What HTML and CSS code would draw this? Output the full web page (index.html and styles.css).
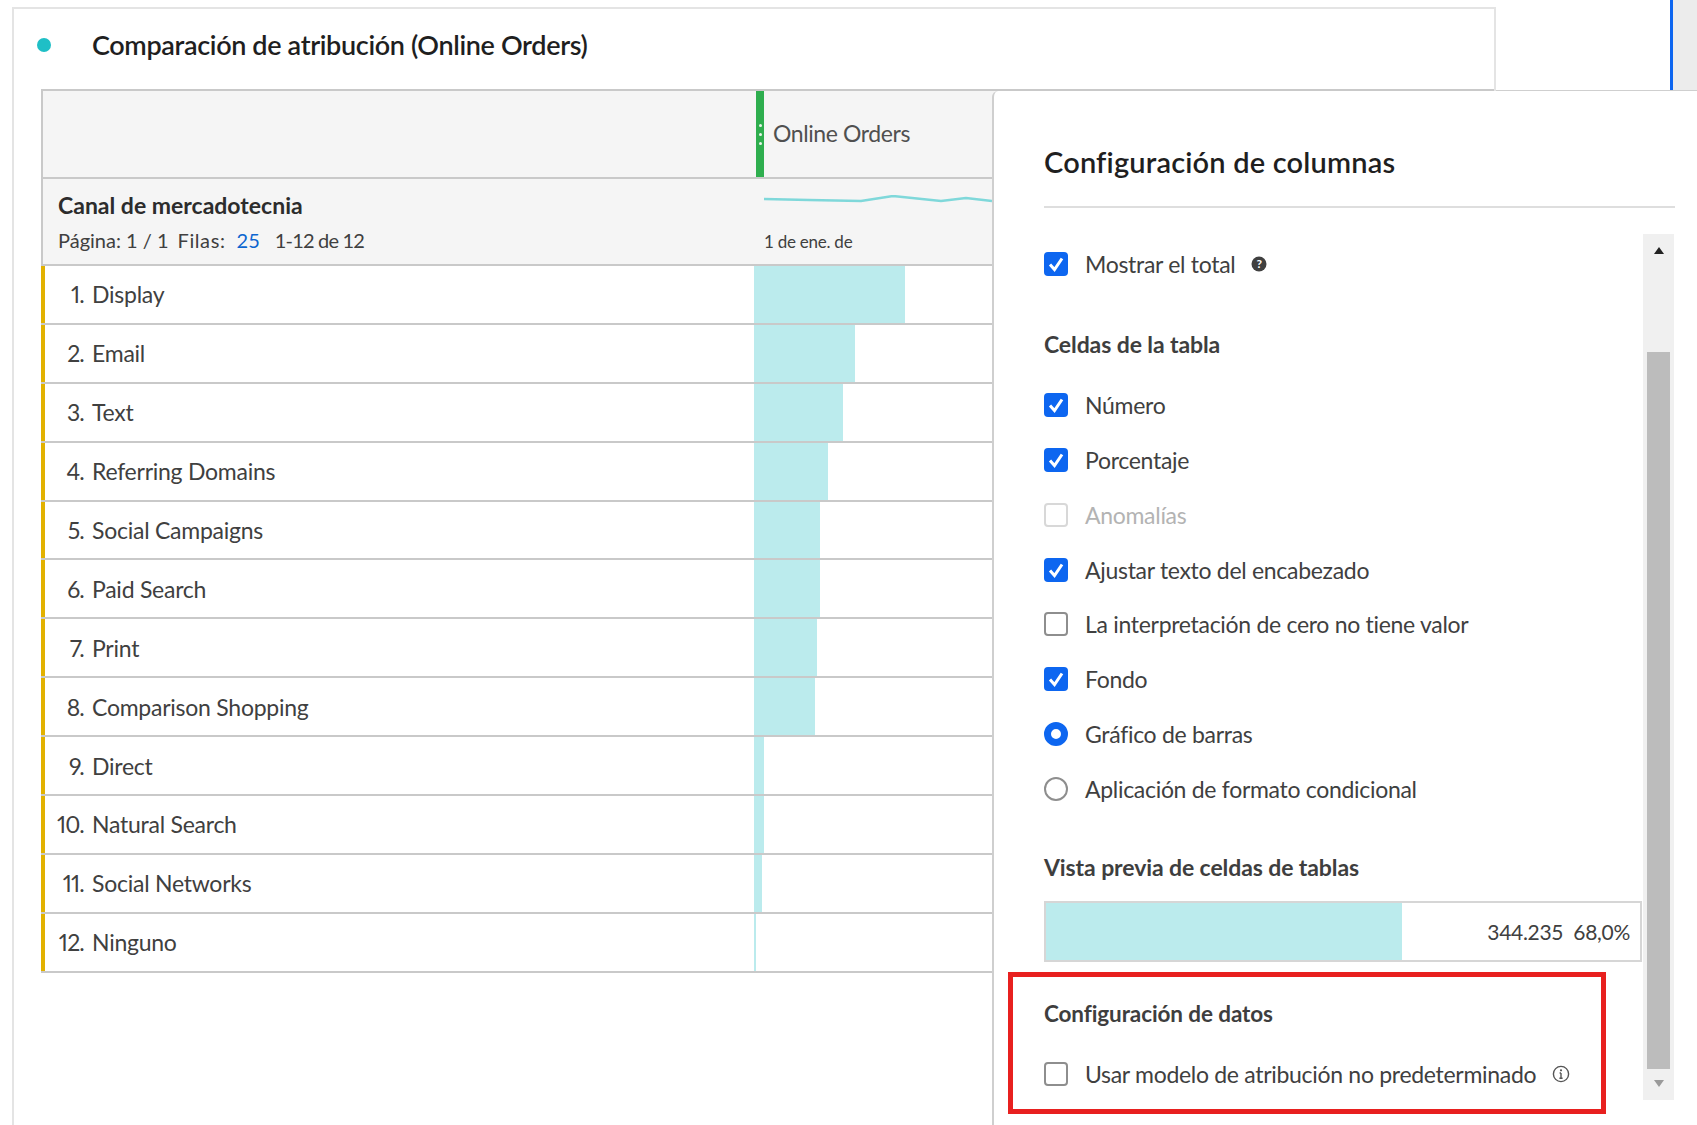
FILE: index.html
```html
<!DOCTYPE html>
<html lang="es">
<head>
    <meta charset="UTF-8">
    <title>Comparación de atribución</title>
    <link rel="stylesheet" href="styles.css">
</head>
<body>
    <div class="page">
        <div class="card">
            <div class="card-title">
                <span class="dot"></span>
                <h1>Comparación de atribución (Online Orders)</h1>
            </div>
            <div class="table">
                <div class="head-row">
                    <div class="head-left"></div>
                    <div class="metric">
                        <span class="grip"><i></i><i></i><i></i></span>
                        <span class="metric-name">Online Orders</span>
                    </div>
                </div>
                <div class="sub-row">
                    <div class="sub-left">
                        <div class="dimension">Canal de mercadotecnia</div>
                        <div class="paging">
                            <span>Página: 1 / 1</span>
                            <span class="rows-label">Filas:</span>
                            <a class="rows-link">25</a>
                            <span class="rows-range">1-12 de 12</span>
                        </div>
                    </div>
                    <div class="sub-right">
                        <svg class="spark" width="228" height="12" viewBox="0 0 228 12"><polyline points="0,4 45,5 97,6 129,1 177,6 202,3 228,6" /></svg>
                        <div class="date">1 de ene. de</div>
                    </div>
                </div>
                <div class="row"><div class="name"><span class="num">1.</span>Display</div><div class="val"><div class="bar" style="width:151px"></div></div></div>
                <div class="row"><div class="name"><span class="num">2.</span>Email</div><div class="val"><div class="bar" style="width:101px"></div></div></div>
                <div class="row"><div class="name"><span class="num">3.</span>Text</div><div class="val"><div class="bar" style="width:89px"></div></div></div>
                <div class="row"><div class="name"><span class="num">4.</span>Referring Domains</div><div class="val"><div class="bar" style="width:74px"></div></div></div>
                <div class="row"><div class="name"><span class="num">5.</span>Social Campaigns</div><div class="val"><div class="bar" style="width:66px"></div></div></div>
                <div class="row"><div class="name"><span class="num">6.</span>Paid Search</div><div class="val"><div class="bar" style="width:66px"></div></div></div>
                <div class="row"><div class="name"><span class="num">7.</span>Print</div><div class="val"><div class="bar" style="width:63px"></div></div></div>
                <div class="row"><div class="name"><span class="num">8.</span>Comparison Shopping</div><div class="val"><div class="bar" style="width:61px"></div></div></div>
                <div class="row"><div class="name"><span class="num">9.</span>Direct</div><div class="val"><div class="bar" style="width:10px"></div></div></div>
                <div class="row"><div class="name"><span class="num">10.</span>Natural Search</div><div class="val"><div class="bar" style="width:10px"></div></div></div>
                <div class="row"><div class="name"><span class="num">11.</span>Social Networks</div><div class="val"><div class="bar" style="width:8px"></div></div></div>
                <div class="row"><div class="name"><span class="num">12.</span>Ninguno</div><div class="val"><div class="bar" style="width:2px"></div></div></div>
            </div>
        </div>
        <div class="side">
            <div class="side-rail"></div>
        </div>
    </div>

    <div class="panel">
        <h2 class="panel-title">Configuración de columnas</h2>
        <div class="panel-body">
            <div class="options">
                <div class="opt first">
                    <span class="check on"><svg viewBox="0 0 24 24"><path d="M6 12.5l4.5 5L18 6.5" /></svg></span>
                    <span>Mostrar el total</span>
                    <svg class="help" viewBox="0 0 16 16"><circle cx="8" cy="8" r="7.5" fill="#404040" /><text x="8" y="12" text-anchor="middle">?</text></svg>
                </div>
                <h3 class="group">Celdas de la tabla</h3>
                <div class="opt">
                    <span class="check on"><svg viewBox="0 0 24 24"><path d="M6 12.5l4.5 5L18 6.5" /></svg></span>
                    <span>Número</span>
                </div>
                <div class="opt">
                    <span class="check on"><svg viewBox="0 0 24 24"><path d="M6 12.5l4.5 5L18 6.5" /></svg></span>
                    <span>Porcentaje</span>
                </div>
                <div class="opt off">
                    <span class="check"></span>
                    <span>Anomalías</span>
                </div>
                <div class="opt">
                    <span class="check on"><svg viewBox="0 0 24 24"><path d="M6 12.5l4.5 5L18 6.5" /></svg></span>
                    <span>Ajustar texto del encabezado</span>
                </div>
                <div class="opt">
                    <span class="check"></span>
                    <span>La interpretación de cero no tiene valor</span>
                </div>
                <div class="opt">
                    <span class="check on"><svg viewBox="0 0 24 24"><path d="M6 12.5l4.5 5L18 6.5" /></svg></span>
                    <span>Fondo</span>
                </div>
                <div class="opt">
                    <span class="radio on"></span>
                    <span>Gráfico de barras</span>
                </div>
                <div class="opt">
                    <span class="radio"></span>
                    <span>Aplicación de formato condicional</span>
                </div>
                <h3 class="group preview-head">Vista previa de celdas de tablas</h3>
                <div class="preview">
                    <div class="preview-bar"></div>
                    <div class="preview-val">344.235 &nbsp;68,0%</div>
                </div>
                <h3 class="group data-head">Configuración de datos</h3>
                <div class="opt">
                    <span class="check"></span>
                    <span>Usar modelo de atribución no predeterminado</span>
                    <svg class="info" viewBox="0 0 18 18"><circle cx="9" cy="9" r="7.6" /><path d="M9 8v5.2M7.4 13.2h3.2M7.6 8h1.4" /><circle class="info-dot" cx="9" cy="5.3" r="1.1" /></svg>
                </div>
            </div>
            <div class="scrollbar">
                <div class="arrow up"></div>
                <div class="thumb"></div>
                <div class="arrow down"></div>
            </div>
        </div>
        <div class="callout"></div>
    </div>
</body>
</html>
```

FILE: styles.css
```css
html, body {
    margin: 0;
    height: 100%;
    background-color: #fff;
    overflow: hidden;
}

body {
    position: relative;
    font-family: "Lato", "Noto Sans", sans-serif;
    color: #404040;
}

.page {
    display: flex;
    align-items: flex-start;
    height: 100%;
}

.card {
    box-sizing: border-box;
    width: 1484px;
    height: 1118px;
    margin: 7px 0 0 12px;
    padding: 0 0 0 27px;
    border: 2px solid #e4e4e4;
    border-bottom: 0;
    flex: none;
}

.card-title {
    display: flex;
    align-items: center;
    height: 80px;
}

.dot {
    width: 14px;
    height: 14px;
    margin-left: -4px;
    margin-top: -8px;
    border-radius: 50%;
    background-color: #1fbfc6;
}

.card-title h1 {
    margin: -10px 0 0 41px;
    font-size: 27px;
    font-weight: 600;
    letter-spacing: -0.35px;
    color: #1f1f1f;
}

.table {
    border-top: 2px solid #c9c9c9;
}

.head-row, .sub-row, .row {
    display: grid;
    grid-template-columns: 713px 1fr;
    box-sizing: border-box;
    border-bottom: 2px solid #c9c9c9;
}

.head-row, .sub-row {
    border-left: 2px solid #c9c9c9;
    grid-template-columns: 711px 1fr;
    background-color: #f5f5f5;
}

.head-row {
    height: 88px;
}

.metric {
    display: flex;
    align-items: center;
    margin-left: 2px;
}

.grip {
    display: flex;
    flex-direction: column;
    align-items: center;
    justify-content: center;
    gap: 6px;
    width: 8px;
    height: 100%;
    background-color: #2eae4e;
}

.grip i {
    width: 3px;
    height: 3px;
    border-radius: 50%;
    background-color: #e8f5ea;
}

.metric-name {
    margin: -2px 0 0 9px;
    font-size: 23px;
    letter-spacing: -0.4px;
    color: #505050;
}

.sub-row {
    height: 87px;
}

.sub-left {
    padding: 10px 0 0 15px;
}

.dimension {
    font-size: 23px;
    font-weight: 700;
    line-height: 32px;
    color: #2c2c2c;
}

.paging {
    display: flex;
    margin-top: 4px;
    font-size: 20px;
    line-height: 30px;
}

.rows-label {
    margin-left: 9px;
    letter-spacing: 0.6px;
}

.rows-link {
    margin-left: 11px;
    color: #0d66d0;
}

.rows-range {
    margin-left: 15px;
    letter-spacing: -0.8px;
}

.sub-right {
    margin-left: 10px;
    padding-top: 16px;
}

.spark {
    display: block;
}

.spark polyline {
    fill: none;
    stroke: #7fd8da;
    stroke-width: 2.5;
}

.date {
    margin-top: 23px;
    font-size: 17px;
    letter-spacing: -0.25px;
    line-height: 24px;
}

.row {
    height: 58.9px;
}

.name {
    display: flex;
    align-items: center;
    border-left: 4px solid #e2b100;
    font-size: 23px;
    letter-spacing: -0.25px;
}

.num {
    width: 39px;
    margin-right: 8px;
    text-align: right;
    font-feature-settings: "pnum";
    letter-spacing: -0.8px;
}

.bar {
    height: 100%;
    background-color: #bbebed;
}

.side {
    display: flex;
    justify-content: flex-end;
    flex: 1;
    box-sizing: border-box;
    height: 92px;
    border-bottom: 2px solid #cfcfcf;
}

.side-rail {
    box-sizing: border-box;
    width: 27px;
    height: 100%;
    border-left: 3px solid #0d66f0;
    background-color: #ececec;
}

.panel {
    position: absolute;
    top: 91px;
    left: 992px;
    right: 0;
    bottom: 0;
    box-sizing: border-box;
    padding-left: 50px;
    border-left: 2px solid #cfcfcf;
    border-top-left-radius: 6px;
    background-color: #fff;
}

.panel-title {
    box-sizing: border-box;
    width: 631px;
    height: 117px;
    margin: 0;
    padding-top: 49px;
    border-bottom: 2px solid #dedede;
    font-size: 29px;
    font-weight: 600;
    line-height: 44px;
    letter-spacing: 0.18px;
    color: #1f1f1f;
}

.panel-body {
    display: flex;
    width: 631px;
    margin-top: 26px;
}

.options {
    width: 599px;
    padding-top: 3px;
    font-size: 23px;
    letter-spacing: -0.3px;
}

.opt {
    display: flex;
    align-items: center;
    height: 54.8px;
}

.opt.off {
    color: #b3b3b3;
}

.check {
    display: block;
    box-sizing: border-box;
    width: 24px;
    height: 24px;
    margin-right: 17px;
    border: 2px solid #8e8e8e;
    border-radius: 4px;
    background-color: #fff;
}

.opt.off .check {
    border-color: #d8d8d8;
}

.check.on {
    border: 0;
    background-color: #0d66f0;
}

.check svg {
    display: block;
    width: 24px;
    height: 24px;
}

.check path {
    fill: none;
    stroke: #fff;
    stroke-width: 3;
}

.radio {
    display: block;
    box-sizing: border-box;
    width: 24px;
    height: 24px;
    margin-right: 17px;
    border: 2px solid #8e8e8e;
    border-radius: 50%;
}

.radio.on {
    border: 7px solid #0d66f0;
}

.help {
    width: 16px;
    height: 16px;
    margin-left: 16px;
}

.help text {
    font-size: 12px;
    font-weight: 700;
    fill: #fff;
}

.info {
    width: 18px;
    height: 18px;
    margin-left: 16px;
}

.info circle, .info path {
    fill: none;
    stroke: #555;
    stroke-width: 1.4;
}

.info .info-dot {
    fill: #555;
    stroke: none;
}

.group {
    margin: 32px 0 14px;
    font-size: 23px;
    font-weight: 700;
    line-height: 40px;
    letter-spacing: -0.1px;
    color: #3e3e3e;
}

.preview-head {
    margin-top: 31px;
    margin-bottom: 14px;
}

.data-head {
    margin-top: 32px;
    margin-bottom: 12px;
    font-size: 22.5px;
}

.preview {
    display: flex;
    align-items: center;
    box-sizing: border-box;
    width: 598px;
    height: 61px;
    border: 2px solid #d6d6d6;
}

.preview-bar {
    width: 356px;
    height: 100%;
    background-color: #bbebed;
}

.preview-val {
    flex: 1;
    padding-right: 10px;
    font-size: 21px;
    text-align: right;
}

.scrollbar {
    display: flex;
    flex-direction: column;
    align-items: center;
    width: 31px;
    height: 866px;
    background-color: #f0f0f0;
}

.arrow {
    width: 0;
    height: 0;
    border-left: 5px solid transparent;
    border-right: 5px solid transparent;
}

.arrow.up {
    margin-top: 13px;
    border-bottom: 7px solid #222;
}

.thumb {
    width: 23px;
    height: 717px;
    margin-top: 98px;
    background-color: #bcbcbc;
}

.arrow.down {
    margin-top: 11px;
    border-top: 7px solid #9a9a9a;
}

.callout {
    position: absolute;
    top: 881px;
    left: 14px;
    width: 588px;
    height: 132px;
    border: 5px solid #e8201f;
}
```
